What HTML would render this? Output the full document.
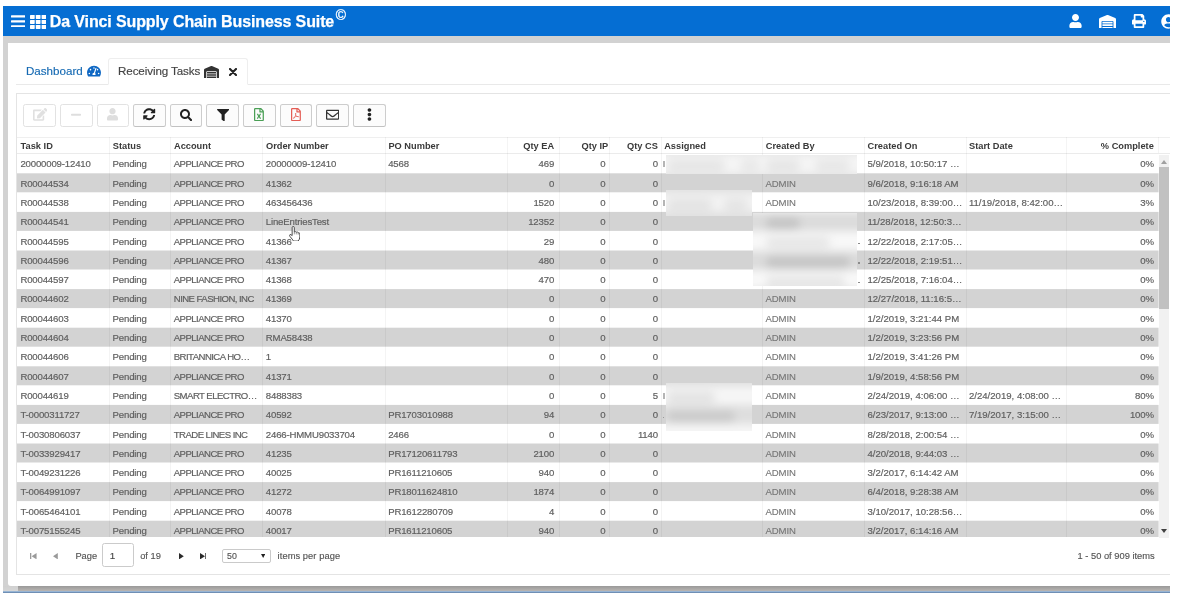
<!DOCTYPE html>
<html><head><meta charset="utf-8">
<style>
*{box-sizing:border-box;margin:0;padding:0}
html,body{width:1177px;height:598px;overflow:hidden;background:#fff;font-family:"Liberation Sans",sans-serif;}
#shot{position:absolute;left:3px;top:6px;width:1167px;height:587px;overflow:hidden;background:#d2d2d2;will-change:transform;}
#topbar{position:absolute;left:0;top:0;width:1167px;height:30px;background:#056ed3;}
#title{position:absolute;left:46.8px;top:5.6px;font-weight:bold;font-size:16px;color:#fff;white-space:nowrap;letter-spacing:-0.12px;line-height:20px;-webkit-text-stroke:0.25px #fff}
#copy{position:absolute;left:332.8px;top:2px;font-size:13.8px;line-height:16px;color:#fff;-webkit-text-stroke:0.3px #fff}
#panel{position:absolute;left:5px;top:37px;width:1170px;height:543px;background:#fff;border-radius:0 0 0 3px}
#bshadow{position:absolute;left:0;top:580px;width:1167px;height:5px;background:linear-gradient(#d0d0d0,#d6d6d6)}
#bshadow2{position:absolute;left:15px;top:580px;width:1152px;height:5px;background:linear-gradient(#999,#b9b5b2)}
#bline{position:absolute;left:0;top:584.6px;width:1167px;height:2.4px;background:linear-gradient(#b5d0ea,#6f8fb5 60%)}
.abs{position:absolute}
/* tabs */
#tabline{position:absolute;left:13px;top:78px;width:1160px;height:1px;background:#e9e9e9}
#tab2{position:absolute;left:105px;top:52px;width:140px;height:27px;border:1px solid #eeeeee;border-bottom:1px solid #fff;border-radius:3px 3px 0 0;background:#fff}
.tabtxt{position:absolute;font-size:11.6px;white-space:nowrap;line-height:14px;-webkit-text-stroke:0.15px currentColor}
/* grid */
#grid{position:absolute;left:13px;top:86.5px;width:1160px;height:482px;border:1px solid #e4e4e4;border-right:none;background:#fff}
.btn{position:absolute;top:10px;width:32.6px;height:23.2px;border:1px solid #cdcdcd;border-bottom-color:#c2c2c2;border-radius:2.5px;background:#fcfcfc}
.btn.dis{border-color:#e2e2e2;background:#fff}
.btn svg{position:absolute;left:0;top:0;width:100%;height:100%}
#hrow{position:absolute;left:0;top:43.5px;width:1160px;height:17px;border-top:1px solid #efefef;border-bottom:1px solid #ebebeb}
.hc{position:absolute;top:1px;height:15px;line-height:15px;font-size:9.25px;font-weight:bold;color:#3a3a3a;padding:0 3.6px;white-space:nowrap;overflow:hidden}
.hc.r{text-align:right;padding-right:4.5px}
#rows{position:absolute;left:0;top:60.8px;width:1141.6px;height:382.9px;overflow:hidden}
.row{position:absolute;left:0;width:1141.6px;height:19.15px}
.row.alt{background:#d3d3d3}
.c{position:absolute;top:0.1px;height:19.3px;line-height:19.3px;font-size:9.6px;letter-spacing:-0.16px;color:#5f5f5f;-webkit-text-stroke:0.18px #5f5f5f;padding:0 3.4px;white-space:nowrap;overflow:hidden}
.c.r{text-align:right;padding-right:4.5px}
.c.adm{color:#747474;-webkit-text-stroke:0.1px #747474}
.sep{position:absolute;top:43.5px;width:1px;height:400px;background:rgba(0,0,0,0.045)}
#sb{position:absolute;left:1141.6px;top:61px;width:10.6px;height:383px;background:#f1f1f1}
#sbthumb{position:absolute;left:0.4px;top:12.4px;width:10.2px;height:142px;background:#c1c1c1}
.blur{position:absolute;filter:blur(2px)}
/* per-column tuning */
.k2{letter-spacing:-0.56px}
.k10,.k11{letter-spacing:0.0px}
.h6{padding-right:1.2px !important}
.h7{padding-right:2.7px !important}
.k7{padding-right:2.7px !important}
.k6{padding-right:4px !important}
.k12,.h12{padding-right:3.7px !important}
/* pager */
.pg{position:absolute;font-size:9.3px;color:#555;-webkit-text-stroke:0.15px #555;line-height:12px;white-space:nowrap}
</style></head><body>
<div id="shot">
 <div id="topbar">
  <svg class="abs" style="left:7.6px;top:8.7px" width="14.6" height="12.8" viewBox="0 0 15 13" preserveAspectRatio="none"><rect x="0" y="0.2" width="15" height="2.4" rx="0.6" fill="#fff"/><rect x="0" y="5.3" width="15" height="2.4" rx="0.6" fill="#fff"/><rect x="0" y="10.4" width="15" height="2.4" rx="0.6" fill="#fff"/></svg>
  <svg class="abs" style="left:26.9px;top:8.6px" width="16.3" height="14" viewBox="0 0 16.6 14" preserveAspectRatio="none"><g fill="#fff"><rect x="0" y="0" width="4.8" height="3.9" rx=".6"/><rect x="5.9" y="0" width="4.8" height="3.9" rx=".6"/><rect x="11.8" y="0" width="4.8" height="3.9" rx=".6"/><rect x="0" y="5" width="4.8" height="3.9" rx=".6"/><rect x="5.9" y="5" width="4.8" height="3.9" rx=".6"/><rect x="11.8" y="5" width="4.8" height="3.9" rx=".6"/><rect x="0" y="10" width="4.8" height="3.9" rx=".6"/><rect x="5.9" y="10" width="4.8" height="3.9" rx=".6"/><rect x="11.8" y="10" width="4.8" height="3.9" rx=".6"/></g></svg>
  <div id="title">Da Vinci Supply Chain Business Suite</div><div id="copy">©</div>
  <!-- right icons -->
  <svg class="abs" style="left:1066px;top:8px" width="13" height="14" viewBox="0 0 448 512"><path fill="#fff" d="M224 256c70.700 0 128-57.300 128-128S294.700 0 224 0 96 57.300 96 128s57.300 128 128 128zm89.600 32h-16.700c-22.200 10.200-46.900 16-72.900 16s-50.600-5.800-72.900-16h-16.700C60.200 288 0 348.200 0 422.400V464c0 26.500 21.500 48 48 48h352c26.500 0 48-21.500 48-48v-41.600c0-74.200-60.200-134.400-134.400-134.400z"/></svg>
  <svg class="abs" style="left:1095.5px;top:8.500px" width="17" height="13.600" viewBox="0 0 640 512"><path fill="#fff" d="M504 352H136.400c-4.400 0-8 3.600-8 8l-.1 48c0 4.400 3.600 8 8 8H504c4.400 0 8-3.600 8-8v-48c0-4.400-3.600-8-8-8zm0 96H136.100c-4.400 0-8 3.600-8 8l-.1 48c0 4.400 3.600 8 8 8h368c4.400 0 8-3.600 8-8v-48c0-4.400-3.600-8-8-8zm0-192H136.600c-4.400 0-8 3.600-8 8l-.1 48c0 4.400 3.600 8 8 8H504c4.400 0 8-3.600 8-8v-48c0-4.400-3.600-8-8-8zm106.500-139L338.400 3.700a48.150 48.150 0 0 0-36.900 0L29.500 117C11.700 124.500 0 141.900 0 161.300V504c0 4.400 3.600 8 8 8h80c4.400 0 8-3.600 8-8V256c0-17.600 14.600-32 32.600-32h382.800c18 0 32.600 14.400 32.600 32v248c0 4.400 3.600 8 8 8h80c4.400 0 8-3.600 8-8V161.300c0-19.400-11.700-36.800-29.500-44.300z"/></svg>
  <svg class="abs" style="left:1129px;top:8px" width="14" height="14" viewBox="0 0 512 512"><path fill="#fff" d="M448 192V77.250c0-8.490-3.370-16.620-9.370-22.630L393.370 9.370c-6-6-14.140-9.370-22.630-9.370H96C78.330 0 64 14.330 64 32v160c-35.350 0-64 28.650-64 64v112c0 8.840 7.160 16 16 16h48v96c0 17.670 14.330 32 32 32h320c17.670 0 32-14.330 32-32v-96h48c8.840 0 16-7.160 16-16V256c0-35.350-28.650-64-64-64zm-64 256H128v-96h256v96zm0-224H128V64h192v48c0 8.840 7.160 16 16 16h48v96zm48 72c-13.250 0-24-10.750-24-24 0-13.260 10.750-24 24-24s24 10.740 24 24c0 13.250-10.750 24-24 24z"/></svg>
  <svg class="abs" style="left:1157.500px;top:7.500px" width="15" height="15" viewBox="0 0 496 512"><path fill="#fff" d="M248 8C111 8 0 119 0 256s111 248 248 248 248-111 248-248S385 8 248 8zm0 96c48.600 0 88 39.400 88 88s-39.400 88-88 88-88-39.400-88-88 39.400-88 88-88zm0 344c-58.700 0-111.300-26.600-146.500-68.200 18.800-35.400 55.600-59.800 98.500-59.800 2.400 0 4.800.4 7.100 1.100 13 4.200 26.600 6.900 40.900 6.900 14.300 0 28-2.700 40.900-6.900 2.300-.7 4.700-1.100 7.100-1.100 42.900 0 79.700 24.400 98.500 59.800C359.300 421.400 306.700 448 248 448z"/></svg>
 </div>
 <div id="panel"></div>
 <div id="bshadow"></div><div id="bshadow2"></div><div id="bline"></div>

 <!-- tabs -->
 <div id="tabline"></div>
 <div id="tab2"></div>
 <div class="tabtxt" style="left:23px;top:58px;color:#166ab3">Dashboard</div>
 <svg class="abs" style="left:83.8px;top:58.9px" width="14" height="12.4" viewBox="0 0 576 512"><path fill="#0f68c4" d="M288 32C128.940 32 0 160.940 0 320c0 52.800 14.250 102.260 39.060 144.800 5.610 9.620 16.300 15.200 27.440 15.200h443c11.140 0 21.830-5.580 27.440-15.200C561.750 422.260 576 372.800 576 320c0-159.060-128.940-288-288-288zm0 64c14.710 0 26.580 10.130 30.320 23.650-1.110 2.260-2.640 4.230-3.450 6.670l-9.220 27.670c-5.130 3.490-10.970 6.010-17.640 6.010-17.670 0-32-14.330-32-32S270.330 96 288 96zM96 384c-17.670 0-32-14.330-32-32s14.330-32 32-32 32 14.330 32 32-14.330 32-32 32zm48-160c-17.670 0-32-14.330-32-32s14.330-32 32-32 32 14.330 32 32-14.330 32-32 32zm246.770-72.410l-61.330 184C343.130 347.330 352 364.540 352 384c0 11.720-3.380 22.550-8.880 32H232.880c-5.500-9.450-8.880-20.280-8.880-32 0-33.940 26.500-61.430 59.900-63.590l61.340-184.010c4.170-12.560 17.730-19.450 30.360-15.170 12.570 4.190 19.350 17.790 15.170 30.360zm14.660 57.200l15.520-46.550c3.470-1.290 7.130-2.230 11.050-2.230 17.670 0 32 14.330 32 32s-14.330 32-32 32c-11.380-.01-20.890-6.280-26.570-15.220zM480 384c-17.670 0-32-14.330-32-32s14.330-32 32-32 32 14.330 32 32-14.330 32-32 32z"/></svg>
 <div class="tabtxt" style="left:115px;top:58px;color:#444;letter-spacing:-0.09px">Receiving Tasks</div>
 <svg class="abs" style="left:200.500px;top:60px" width="15" height="12" viewBox="0 0 640 512"><path fill="#333" d="M504 352H136.400c-4.400 0-8 3.600-8 8l-.1 48c0 4.400 3.600 8 8 8H504c4.400 0 8-3.600 8-8v-48c0-4.400-3.600-8-8-8zm0 96H136.100c-4.400 0-8 3.600-8 8l-.1 48c0 4.400 3.600 8 8 8h368c4.400 0 8-3.600 8-8v-48c0-4.400-3.600-8-8-8zm0-192H136.600c-4.400 0-8 3.600-8 8l-.1 48c0 4.400 3.600 8 8 8H504c4.400 0 8-3.600 8-8v-48c0-4.400-3.600-8-8-8zm106.500-139L338.400 3.700a48.150 48.150 0 0 0-36.900 0L29.500 117C11.700 124.500 0 141.900 0 161.300V504c0 4.400 3.600 8 8 8h80c4.400 0 8-3.600 8-8V256c0-17.600 14.600-32 32.600-32h382.800c18 0 32.600 14.400 32.600 32v248c0 4.400 3.600 8 8 8h80c4.400 0 8-3.600 8-8V161.300c0-19.400-11.700-36.800-29.500-44.300z"/></svg>
 <svg class="abs" style="left:225.500px;top:61.500px" width="8" height="8" viewBox="0 0 8 8"><path d="M1 1L7 7M7 1L1 7" stroke="#222" stroke-width="2.1" stroke-linecap="round"/></svg>

 <!-- grid -->
 <div id="grid">
  <!-- toolbar buttons: inserted below -->
  <div class="btn dis" style="left:6.30px"><svg style="left:8.80px;top:3.60px;width:14.40px;height:12.80px" viewBox="0 0 576 512"><path fill="#e0e0e0" d="M402.6 83.200l90.200 90.200c3.800 3.800 3.800 10 0 13.800L274.400 405.600l-92.800 10.300c-12.400 1.400-22.900-9.100-21.500-21.500l10.300-92.800L388.800 83.200c3.800-3.800 10-3.800 13.800 0zm162-22.900l-48.800-48.800c-15.200-15.200-39.900-15.200-55.200 0l-35.400 35.400c-3.800 3.800-3.800 10 0 13.800l90.200 90.200c3.800 3.800 10 3.800 13.800 0l35.400-35.400c15.200-15.300 15.200-40 0-55.200zM384 346.200V448H64V128h229.800c3.200 0 6.200-1.300 8.500-3.500l40-40c7.600-7.600 2.200-20.500-8.500-20.500H48C21.500 64 0 85.500 0 112v352c0 26.500 21.500 48 48 48h352c26.500 0 48-21.500 48-48V306.200c0-10.700-12.900-16-20.500-8.500l-40 40c-2.200 2.300-3.500 5.300-3.500 8.500z"/></svg></div>
<div class="btn dis" style="left:42.93px"><svg style="left:10.27px;top:4.35px;width:10.06px;height:11.50px" viewBox="0 0 448 512"><path fill="#dedede" d="M416 208H32c-17.670 0-32 14.330-32 32v32c0 17.670 14.330 32 32 32h384c17.670 0 32-14.330 32-32v-32c0-17.670-14.330-32-32-32z"/></svg></div>
<div class="btn dis" style="left:79.56px"><svg style="left:9.79px;top:3.60px;width:11.03px;height:12.60px" viewBox="0 0 448 512"><path fill="#dedede" d="M224 256c70.700 0 128-57.300 128-128S294.700 0 224 0 96 57.300 96 128s57.300 128 128 128zm89.600 32h-16.700c-22.200 10.200-46.900 16-72.900 16s-50.600-5.800-72.900-16h-16.700C60.200 288 0 348.200 0 422.400V464c0 26.500 21.500 48 48 48h352c26.500 0 48-21.500 48-48v-41.600c0-74.200-60.200-134.400-134.400-134.400z"/></svg></div>
<div class="btn" style="left:116.19px"><svg style="left:9.10px;top:3.90px;width:12.40px;height:12.40px" viewBox="0 0 512 512"><path fill="#222" d="M370.720 133.280C339.458 104.008 298.888 87.962 255.848 88c-77.458.068-144.328 53.178-162.791 126.850-1.344 5.363-6.122 9.150-11.651 9.150H24.103c-7.498 0-13.194-6.807-11.807-14.176C33.933 94.924 134.813 8 256 8c66.448 0 126.791 26.136 171.315 68.685L463.030 40.970C478.149 25.851 504 36.559 504 57.941V192c0 13.255-10.745 24-24 24H345.941c-21.382 0-32.090-25.851-16.971-40.971l41.750-41.749zM32 296h134.059c21.382 0 32.090 25.851 16.971 40.971l-41.750 41.750c31.262 29.273 71.835 45.319 114.876 45.280 77.418-.07 144.315-53.144 162.787-126.849 1.344-5.363 6.122-9.150 11.651-9.150h57.304c7.498 0 13.194 6.807 11.807 14.176C478.067 417.076 377.187 504 256 504c-66.448 0-126.791-26.136-171.315-68.685L48.970 471.030C33.851 486.149 8 475.441 8 454.059V320c0-13.255 10.745-24 24-24z"/></svg></div>
<div class="btn" style="left:152.82px"><svg style="left:9.15px;top:4.25px;width:12.30px;height:12.30px" viewBox="0 0 512 512"><path fill="#222" d="M505 442.700L405.300 343c-4.500-4.500-10.600-7-17-7H372c27.600-35.300 44-79.700 44-128C416 93.100 322.900 0 208 0S0 93.100 0 208s93.100 208 208 208c48.300 0 92.700-16.400 128-44v16.300c0 6.400 2.500 12.500 7 17l99.700 99.700c9.400 9.400 24.600 9.400 33.900 0l28.300-28.300c9.400-9.400 9.400-24.600.1-34zM208 336c-70.700 0-128-57.200-128-128 0-70.700 57.200-128 128-128 70.700 0 128 57.200 128 128 0 70.700-57.200 128-128 128z"/></svg></div>
<div class="btn" style="left:189.45px"><svg style="left:9.15px;top:4.15px;width:12.30px;height:12.30px" viewBox="0 0 512 512"><path fill="#222" d="M487.976 0H24.028C2.710 0-8.047 25.866 7.058 40.971L192 225.941V432c0 7.831 3.821 15.170 10.237 19.662l80 55.980C298.020 518.690 320 507.493 320 487.980V225.941l184.947-184.970C520.021 25.896 509.338 0 487.976 0z"/></svg></div>
<div class="btn" style="left:226.08px"><svg style="left:10.35px;top:3.60px;width:9.90px;height:13.20px" viewBox="0 0 384 512"><path fill="#4a9f55" d="M369.900 97.900L286 14C277 5 264.800-.1 252.100-.1H48C21.500 0 0 21.500 0 48v416c0 26.500 21.500 48 48 48h288c26.500 0 48-21.500 48-48V131.900c0-12.700-5.100-25-14.100-34zM332.100 128H256V51.900l76.100 76.100zM48 464V48h160v104c0 13.300 10.700 24 24 24h104v288H48zm212-240h-28.800c-4.400 0-8.400 2.400-10.500 6.300-18 33.100-22.200 42.400-28.600 57.700-13.900-29.100-6.900-17.300-28.600-57.700-2.100-3.900-6.200-6.300-10.600-6.300H124c-9.300 0-15 10-10.400 18l46.300 78-46.300 78c-4.700 8 1.100 18 10.400 18h28.900c4.400 0 8.400-2.400 10.500-6.300 21.700-40 23-45 28.600-57.700 14.900 30.200 5.900 15.900 28.600 57.700 2.100 3.900 6.200 6.300 10.600 6.300H260c9.300 0 15-10 10.400-18L224 320c.7-1.100 30.300-50.500 46.300-78 4.700-8-1.100-18-10.300-18z"/></svg></div>
<div class="btn" style="left:262.71px"><svg style="left:10.35px;top:3.60px;width:9.90px;height:13.20px" viewBox="0 0 384 512"><path fill="#e45d55" d="M369.900 97.900L286 14C277 5 264.800-.1 252.100-.1H48C21.500 0 0 21.500 0 48v416c0 26.500 21.500 48 48 48h288c26.500 0 48-21.500 48-48V131.900c0-12.700-5.100-25-14.100-34zM332.100 128H256V51.900l76.100 76.100zM48 464V48h160v104c0 13.300 10.700 24 24 24h104v288H48zm250.200-143.700c-12.200-12-47-8.700-64.400-6.500-17.200-10.500-28.700-25-36.800-46.300 3.900-16.100 10.100-40.600 5.400-56-4.200-26.200-37.800-23.600-42.600-5.900-4.400 16.100-.4 38.500 7 67.100-10 23.900-24.900 56-35.400 74.400-20 10.300-47 26.200-51 46.200-3.300 15.800 26 55.200 76.100-31.200 22.400-7.400 46.800-16.500 68.400-20.100 18.900 10.200 41 17 55.800 17 25.500 0 28-28.200 17.500-38.700zm-198.100 77.800c5.100-13.700 24.500-29.500 30.400-35-19 30.300-30.400 35.700-30.400 35zm81.600-190.600c7.400 0 6.700 32.100 1.800 40.800-4.400-13.900-4.300-40.800-1.800-40.800zm-24.400 136.600c9.700-16.900 18-37 24.700-54.700 8.300 15.100 18.900 27.200 30.100 35.500-20.800 4.300-38.900 13.100-54.800 19.200zm131.600-5s-5 6-37.300-7.800c35.100-2.600 40.900 5.400 37.300 7.800z"/></svg></div>
<div class="btn" style="left:299.34px"><svg style="left:8.65px;top:3.35px;width:13.30px;height:13.30px" viewBox="0 0 512 512"><path fill="#333" d="M464 64H48C21.490 64 0 85.490 0 112v288c0 26.510 21.490 48 48 48h416c26.510 0 48-21.490 48-48V112c0-26.510-21.490-48-48-48zm0 48v40.805c-22.422 18.259-58.168 46.651-134.587 106.490-16.841 13.247-50.201 45.072-73.413 44.701-23.208.375-56.579-31.459-73.413-44.701C106.180 199.465 70.425 171.067 48 152.805V112h416zM48 400V214.398c22.914 18.251 55.409 43.862 104.938 82.646 21.857 17.205 60.134 55.186 103.062 54.955 42.717.231 80.509-37.199 103.053-54.947 49.528-38.783 82.032-64.401 104.947-82.653V400H48z"/></svg></div>
<div class="btn" style="left:335.97px"><svg style="left:12.86px;top:3.50px;width:4.88px;height:13.00px" viewBox="0 0 192 512"><path fill="#222" d="M96 184c39.800 0 72 32.200 72 72s-32.200 72-72 72-72-32.200-72-72 32.200-72 72-72zM24 80c0 39.800 32.200 72 72 72s72-32.200 72-72S135.800 8 96 8 24 40.200 24 80zm0 352c0 39.800 32.200 72 72 72s72-32.200 72-72-32.200-72-72-72-72 32.200-72 72z"/></svg></div>
  <div id="hrow">
<div class="hc h0" style="left:0.0px;width:92.2px">Task ID</div>
<div class="hc h1" style="left:92.2px;width:61.2px">Status</div>
<div class="hc h2" style="left:153.4px;width:92.0px">Account</div>
<div class="hc h3" style="left:245.4px;width:122.4px">Order Number</div>
<div class="hc h4" style="left:367.8px;width:122.4px">PO Number</div>
<div class="hc r h5" style="left:490.2px;width:51.4px">Qty EA</div>
<div class="hc r h6" style="left:541.6px;width:50.8px">Qty IP</div>
<div class="hc r h7" style="left:592.4px;width:51.2px">Qty CS</div>
<div class="hc h8" style="left:643.6px;width:101.6px">Assigned</div>
<div class="hc h9" style="left:745.2px;width:101.8px">Created By</div>
<div class="hc h10" style="left:847.0px;width:101.5px">Created On</div>
<div class="hc h11" style="left:948.5px;width:100.5px">Start Date</div>
<div class="hc r h12" style="left:1049.0px;width:91.5px">% Complete</div>
  </div>
  <div id="rows">
<svg style="position:absolute;left:0;top:0" width="1141.6" height="390" viewBox="0 0 1141.6 390"><rect x="0" y="19.30" width="1141.6" height="19" fill="#d3d3d3"/><rect x="0" y="57.90" width="1141.6" height="19" fill="#d3d3d3"/><rect x="0" y="96.50" width="1141.6" height="19" fill="#d3d3d3"/><rect x="0" y="135.10" width="1141.6" height="19" fill="#d3d3d3"/><rect x="0" y="173.70" width="1141.6" height="19" fill="#d3d3d3"/><rect x="0" y="212.30" width="1141.6" height="19" fill="#d3d3d3"/><rect x="0" y="250.90" width="1141.6" height="19" fill="#d3d3d3"/><rect x="0" y="289.50" width="1141.6" height="19" fill="#d3d3d3"/><rect x="0" y="328.10" width="1141.6" height="19" fill="#d3d3d3"/><rect x="0" y="366.70" width="1141.6" height="19" fill="#d3d3d3"/></svg>
<div class="row" style="top:0.00px">
<div class="c k0" style="left:0.0px;width:92.2px">20000009-12410</div>
<div class="c k1" style="left:92.2px;width:61.2px">Pending</div>
<div class="c k2" style="left:153.4px;width:92.0px">APPLIANCE PRO</div>
<div class="c k3" style="left:245.4px;width:122.4px">20000009-12410</div>
<div class="c k4" style="left:367.8px;width:122.4px">4568</div>
<div class="c r k5" style="left:490.2px;width:51.4px">469</div>
<div class="c r k6" style="left:541.6px;width:50.8px">0</div>
<div class="c r k7" style="left:592.4px;width:51.2px">0</div>
<div class="c k10" style="left:847.0px;width:101.5px">5/9/2018, 10:50:17 …</div>
<div class="c r k12" style="left:1049.0px;width:91.5px">0%</div>
</div>
<div class="row" style="top:19.30px">
<div class="c k0" style="left:0.0px;width:92.2px">R00044534</div>
<div class="c k1" style="left:92.2px;width:61.2px">Pending</div>
<div class="c k2" style="left:153.4px;width:92.0px">APPLIANCE PRO</div>
<div class="c k3" style="left:245.4px;width:122.4px">41362</div>
<div class="c r k5" style="left:490.2px;width:51.4px">0</div>
<div class="c r k6" style="left:541.6px;width:50.8px">0</div>
<div class="c r k7" style="left:592.4px;width:51.2px">0</div>
<div class="c k9 adm" style="left:745.2px;width:101.8px">ADMIN</div>
<div class="c k10" style="left:847.0px;width:101.5px">9/6/2018, 9:16:18 AM</div>
<div class="c r k12" style="left:1049.0px;width:91.5px">0%</div>
</div>
<div class="row" style="top:38.60px">
<div class="c k0" style="left:0.0px;width:92.2px">R00044538</div>
<div class="c k1" style="left:92.2px;width:61.2px">Pending</div>
<div class="c k2" style="left:153.4px;width:92.0px">APPLIANCE PRO</div>
<div class="c k3" style="left:245.4px;width:122.4px">463456436</div>
<div class="c r k5" style="left:490.2px;width:51.4px">1520</div>
<div class="c r k6" style="left:541.6px;width:50.8px">0</div>
<div class="c r k7" style="left:592.4px;width:51.2px">0</div>
<div class="c k9 adm" style="left:745.2px;width:101.8px">ADMIN</div>
<div class="c k10" style="left:847.0px;width:101.5px">10/23/2018, 8:39:00…</div>
<div class="c k11" style="left:948.5px;width:100.5px">11/19/2018, 8:42:00…</div>
<div class="c r k12" style="left:1049.0px;width:91.5px">3%</div>
</div>
<div class="row" style="top:57.90px">
<div class="c k0" style="left:0.0px;width:92.2px">R00044541</div>
<div class="c k1" style="left:92.2px;width:61.2px">Pending</div>
<div class="c k2" style="left:153.4px;width:92.0px">APPLIANCE PRO</div>
<div class="c k3" style="left:245.4px;width:122.4px">LineEntriesTest</div>
<div class="c r k5" style="left:490.2px;width:51.4px">12352</div>
<div class="c r k6" style="left:541.6px;width:50.8px">0</div>
<div class="c r k7" style="left:592.4px;width:51.2px">0</div>
<div class="c k10" style="left:847.0px;width:101.5px">11/28/2018, 12:50:3…</div>
<div class="c r k12" style="left:1049.0px;width:91.5px">0%</div>
</div>
<div class="row" style="top:77.20px">
<div class="c k0" style="left:0.0px;width:92.2px">R00044595</div>
<div class="c k1" style="left:92.2px;width:61.2px">Pending</div>
<div class="c k2" style="left:153.4px;width:92.0px">APPLIANCE PRO</div>
<div class="c k3" style="left:245.4px;width:122.4px">41366</div>
<div class="c r k5" style="left:490.2px;width:51.4px">29</div>
<div class="c r k6" style="left:541.6px;width:50.8px">0</div>
<div class="c r k7" style="left:592.4px;width:51.2px">0</div>
<div class="c k10" style="left:847.0px;width:101.5px">12/22/2018, 2:17:05…</div>
<div class="c r k12" style="left:1049.0px;width:91.5px">0%</div>
</div>
<div class="row" style="top:96.50px">
<div class="c k0" style="left:0.0px;width:92.2px">R00044596</div>
<div class="c k1" style="left:92.2px;width:61.2px">Pending</div>
<div class="c k2" style="left:153.4px;width:92.0px">APPLIANCE PRO</div>
<div class="c k3" style="left:245.4px;width:122.4px">41367</div>
<div class="c r k5" style="left:490.2px;width:51.4px">480</div>
<div class="c r k6" style="left:541.6px;width:50.8px">0</div>
<div class="c r k7" style="left:592.4px;width:51.2px">0</div>
<div class="c k10" style="left:847.0px;width:101.5px">12/22/2018, 2:19:51…</div>
<div class="c r k12" style="left:1049.0px;width:91.5px">0%</div>
</div>
<div class="row" style="top:115.80px">
<div class="c k0" style="left:0.0px;width:92.2px">R00044597</div>
<div class="c k1" style="left:92.2px;width:61.2px">Pending</div>
<div class="c k2" style="left:153.4px;width:92.0px">APPLIANCE PRO</div>
<div class="c k3" style="left:245.4px;width:122.4px">41368</div>
<div class="c r k5" style="left:490.2px;width:51.4px">470</div>
<div class="c r k6" style="left:541.6px;width:50.8px">0</div>
<div class="c r k7" style="left:592.4px;width:51.2px">0</div>
<div class="c k10" style="left:847.0px;width:101.5px">12/25/2018, 7:16:04…</div>
<div class="c r k12" style="left:1049.0px;width:91.5px">0%</div>
</div>
<div class="row" style="top:135.10px">
<div class="c k0" style="left:0.0px;width:92.2px">R00044602</div>
<div class="c k1" style="left:92.2px;width:61.2px">Pending</div>
<div class="c k2" style="left:153.4px;width:92.0px">NINE FASHION, INC</div>
<div class="c k3" style="left:245.4px;width:122.4px">41369</div>
<div class="c r k5" style="left:490.2px;width:51.4px">0</div>
<div class="c r k6" style="left:541.6px;width:50.8px">0</div>
<div class="c r k7" style="left:592.4px;width:51.2px">0</div>
<div class="c k9 adm" style="left:745.2px;width:101.8px">ADMIN</div>
<div class="c k10" style="left:847.0px;width:101.5px">12/27/2018, 11:16:5…</div>
<div class="c r k12" style="left:1049.0px;width:91.5px">0%</div>
</div>
<div class="row" style="top:154.40px">
<div class="c k0" style="left:0.0px;width:92.2px">R00044603</div>
<div class="c k1" style="left:92.2px;width:61.2px">Pending</div>
<div class="c k2" style="left:153.4px;width:92.0px">APPLIANCE PRO</div>
<div class="c k3" style="left:245.4px;width:122.4px">41370</div>
<div class="c r k5" style="left:490.2px;width:51.4px">0</div>
<div class="c r k6" style="left:541.6px;width:50.8px">0</div>
<div class="c r k7" style="left:592.4px;width:51.2px">0</div>
<div class="c k9 adm" style="left:745.2px;width:101.8px">ADMIN</div>
<div class="c k10" style="left:847.0px;width:101.5px">1/2/2019, 3:21:44 PM</div>
<div class="c r k12" style="left:1049.0px;width:91.5px">0%</div>
</div>
<div class="row" style="top:173.70px">
<div class="c k0" style="left:0.0px;width:92.2px">R00044604</div>
<div class="c k1" style="left:92.2px;width:61.2px">Pending</div>
<div class="c k2" style="left:153.4px;width:92.0px">APPLIANCE PRO</div>
<div class="c k3" style="left:245.4px;width:122.4px">RMA58438</div>
<div class="c r k5" style="left:490.2px;width:51.4px">0</div>
<div class="c r k6" style="left:541.6px;width:50.8px">0</div>
<div class="c r k7" style="left:592.4px;width:51.2px">0</div>
<div class="c k9 adm" style="left:745.2px;width:101.8px">ADMIN</div>
<div class="c k10" style="left:847.0px;width:101.5px">1/2/2019, 3:23:56 PM</div>
<div class="c r k12" style="left:1049.0px;width:91.5px">0%</div>
</div>
<div class="row" style="top:193.00px">
<div class="c k0" style="left:0.0px;width:92.2px">R00044606</div>
<div class="c k1" style="left:92.2px;width:61.2px">Pending</div>
<div class="c k2" style="left:153.4px;width:92.0px">BRITANNICA HO…</div>
<div class="c k3" style="left:245.4px;width:122.4px">1</div>
<div class="c r k5" style="left:490.2px;width:51.4px">0</div>
<div class="c r k6" style="left:541.6px;width:50.8px">0</div>
<div class="c r k7" style="left:592.4px;width:51.2px">0</div>
<div class="c k9 adm" style="left:745.2px;width:101.8px">ADMIN</div>
<div class="c k10" style="left:847.0px;width:101.5px">1/2/2019, 3:41:26 PM</div>
<div class="c r k12" style="left:1049.0px;width:91.5px">0%</div>
</div>
<div class="row" style="top:212.30px">
<div class="c k0" style="left:0.0px;width:92.2px">R00044607</div>
<div class="c k1" style="left:92.2px;width:61.2px">Pending</div>
<div class="c k2" style="left:153.4px;width:92.0px">APPLIANCE PRO</div>
<div class="c k3" style="left:245.4px;width:122.4px">41371</div>
<div class="c r k5" style="left:490.2px;width:51.4px">0</div>
<div class="c r k6" style="left:541.6px;width:50.8px">0</div>
<div class="c r k7" style="left:592.4px;width:51.2px">0</div>
<div class="c k9 adm" style="left:745.2px;width:101.8px">ADMIN</div>
<div class="c k10" style="left:847.0px;width:101.5px">1/9/2019, 4:58:56 PM</div>
<div class="c r k12" style="left:1049.0px;width:91.5px">0%</div>
</div>
<div class="row" style="top:231.60px">
<div class="c k0" style="left:0.0px;width:92.2px">R00044619</div>
<div class="c k1" style="left:92.2px;width:61.2px">Pending</div>
<div class="c k2" style="left:153.4px;width:92.0px">SMART ELECTRO…</div>
<div class="c k3" style="left:245.4px;width:122.4px">8488383</div>
<div class="c r k5" style="left:490.2px;width:51.4px">0</div>
<div class="c r k6" style="left:541.6px;width:50.8px">0</div>
<div class="c r k7" style="left:592.4px;width:51.2px">5</div>
<div class="c k9 adm" style="left:745.2px;width:101.8px">ADMIN</div>
<div class="c k10" style="left:847.0px;width:101.5px">2/24/2019, 4:06:00 …</div>
<div class="c k11" style="left:948.5px;width:100.5px">2/24/2019, 4:08:00 …</div>
<div class="c r k12" style="left:1049.0px;width:91.5px">80%</div>
</div>
<div class="row" style="top:250.90px">
<div class="c k0" style="left:0.0px;width:92.2px">T-0000311727</div>
<div class="c k1" style="left:92.2px;width:61.2px">Pending</div>
<div class="c k2" style="left:153.4px;width:92.0px">APPLIANCE PRO</div>
<div class="c k3" style="left:245.4px;width:122.4px">40592</div>
<div class="c k4" style="left:367.8px;width:122.4px">PR1703010988</div>
<div class="c r k5" style="left:490.2px;width:51.4px">94</div>
<div class="c r k6" style="left:541.6px;width:50.8px">0</div>
<div class="c r k7" style="left:592.4px;width:51.2px">0</div>
<div class="c k9 adm" style="left:745.2px;width:101.8px">ADMIN</div>
<div class="c k10" style="left:847.0px;width:101.5px">6/23/2017, 9:13:00 …</div>
<div class="c k11" style="left:948.5px;width:100.5px">7/19/2017, 3:15:00 …</div>
<div class="c r k12" style="left:1049.0px;width:91.5px">100%</div>
</div>
<div class="row" style="top:270.20px">
<div class="c k0" style="left:0.0px;width:92.2px">T-0030806037</div>
<div class="c k1" style="left:92.2px;width:61.2px">Pending</div>
<div class="c k2" style="left:153.4px;width:92.0px">TRADE LINES INC</div>
<div class="c k3" style="left:245.4px;width:122.4px">2466-HMMU9033704</div>
<div class="c k4" style="left:367.8px;width:122.4px">2466</div>
<div class="c r k5" style="left:490.2px;width:51.4px">0</div>
<div class="c r k6" style="left:541.6px;width:50.8px">0</div>
<div class="c r k7" style="left:592.4px;width:51.2px">1140</div>
<div class="c k9 adm" style="left:745.2px;width:101.8px">ADMIN</div>
<div class="c k10" style="left:847.0px;width:101.5px">8/28/2018, 2:00:54 …</div>
<div class="c r k12" style="left:1049.0px;width:91.5px">0%</div>
</div>
<div class="row" style="top:289.50px">
<div class="c k0" style="left:0.0px;width:92.2px">T-0033929417</div>
<div class="c k1" style="left:92.2px;width:61.2px">Pending</div>
<div class="c k2" style="left:153.4px;width:92.0px">APPLIANCE PRO</div>
<div class="c k3" style="left:245.4px;width:122.4px">41235</div>
<div class="c k4" style="left:367.8px;width:122.4px">PR17120611793</div>
<div class="c r k5" style="left:490.2px;width:51.4px">2100</div>
<div class="c r k6" style="left:541.6px;width:50.8px">0</div>
<div class="c r k7" style="left:592.4px;width:51.2px">0</div>
<div class="c k9 adm" style="left:745.2px;width:101.8px">ADMIN</div>
<div class="c k10" style="left:847.0px;width:101.5px">4/20/2018, 9:44:03 …</div>
<div class="c r k12" style="left:1049.0px;width:91.5px">0%</div>
</div>
<div class="row" style="top:308.80px">
<div class="c k0" style="left:0.0px;width:92.2px">T-0049231226</div>
<div class="c k1" style="left:92.2px;width:61.2px">Pending</div>
<div class="c k2" style="left:153.4px;width:92.0px">APPLIANCE PRO</div>
<div class="c k3" style="left:245.4px;width:122.4px">40025</div>
<div class="c k4" style="left:367.8px;width:122.4px">PR1611210605</div>
<div class="c r k5" style="left:490.2px;width:51.4px">940</div>
<div class="c r k6" style="left:541.6px;width:50.8px">0</div>
<div class="c r k7" style="left:592.4px;width:51.2px">0</div>
<div class="c k9 adm" style="left:745.2px;width:101.8px">ADMIN</div>
<div class="c k10" style="left:847.0px;width:101.5px">3/2/2017, 6:14:42 AM</div>
<div class="c r k12" style="left:1049.0px;width:91.5px">0%</div>
</div>
<div class="row" style="top:328.10px">
<div class="c k0" style="left:0.0px;width:92.2px">T-0064991097</div>
<div class="c k1" style="left:92.2px;width:61.2px">Pending</div>
<div class="c k2" style="left:153.4px;width:92.0px">APPLIANCE PRO</div>
<div class="c k3" style="left:245.4px;width:122.4px">41272</div>
<div class="c k4" style="left:367.8px;width:122.4px">PR18011624810</div>
<div class="c r k5" style="left:490.2px;width:51.4px">1874</div>
<div class="c r k6" style="left:541.6px;width:50.8px">0</div>
<div class="c r k7" style="left:592.4px;width:51.2px">0</div>
<div class="c k9 adm" style="left:745.2px;width:101.8px">ADMIN</div>
<div class="c k10" style="left:847.0px;width:101.5px">6/4/2018, 9:28:38 AM</div>
<div class="c r k12" style="left:1049.0px;width:91.5px">0%</div>
</div>
<div class="row" style="top:347.40px">
<div class="c k0" style="left:0.0px;width:92.2px">T-0065464101</div>
<div class="c k1" style="left:92.2px;width:61.2px">Pending</div>
<div class="c k2" style="left:153.4px;width:92.0px">APPLIANCE PRO</div>
<div class="c k3" style="left:245.4px;width:122.4px">40078</div>
<div class="c k4" style="left:367.8px;width:122.4px">PR1612280709</div>
<div class="c r k5" style="left:490.2px;width:51.4px">4</div>
<div class="c r k6" style="left:541.6px;width:50.8px">0</div>
<div class="c r k7" style="left:592.4px;width:51.2px">0</div>
<div class="c k9 adm" style="left:745.2px;width:101.8px">ADMIN</div>
<div class="c k10" style="left:847.0px;width:101.5px">3/10/2017, 10:28:56…</div>
<div class="c r k12" style="left:1049.0px;width:91.5px">0%</div>
</div>
<div class="row" style="top:366.70px">
<div class="c k0" style="left:0.0px;width:92.2px">T-0075155245</div>
<div class="c k1" style="left:92.2px;width:61.2px">Pending</div>
<div class="c k2" style="left:153.4px;width:92.0px">APPLIANCE PRO</div>
<div class="c k3" style="left:245.4px;width:122.4px">40017</div>
<div class="c k4" style="left:367.8px;width:122.4px">PR1611210605</div>
<div class="c r k5" style="left:490.2px;width:51.4px">940</div>
<div class="c r k6" style="left:541.6px;width:50.8px">0</div>
<div class="c r k7" style="left:592.4px;width:51.2px">0</div>
<div class="c k9 adm" style="left:745.2px;width:101.8px">ADMIN</div>
<div class="c k10" style="left:847.0px;width:101.5px">3/2/2017, 6:14:16 AM</div>
<div class="c r k12" style="left:1049.0px;width:91.5px">0%</div>
</div>
  </div>
<div class="sep" style="left:92.2px"></div>
<div class="sep" style="left:153.4px"></div>
<div class="sep" style="left:245.4px"></div>
<div class="sep" style="left:367.8px"></div>
<div class="sep" style="left:490.2px"></div>
<div class="sep" style="left:541.6px"></div>
<div class="sep" style="left:592.4px"></div>
<div class="sep" style="left:643.6px"></div>
<div class="sep" style="left:745.2px"></div>
<div class="sep" style="left:847.0px"></div>
<div class="sep" style="left:948.5px"></div>
<div class="sep" style="left:1049.0px"></div>
  <div class="sep" style="left:1140.5px;height:16px"></div>
  <div id="sb"><div id="sbthumb"></div>
   <svg class="abs" style="left:2.500px;top:5px" width="6" height="4" viewBox="0 0 6 4"><path d="M0 4L3 0L6 4Z" fill="#a0a0a0"/></svg>
   <svg class="abs" style="left:2.500px;top:374px" width="6" height="4" viewBox="0 0 6 4"><path d="M0 0L3 4L6 0Z" fill="#404040"/></svg>
  </div>
  <div style="position:absolute;left:648.9px;top:61.7px;width:191.6px;height:19.0px;overflow:hidden;background:#fff"><div style="position:absolute;left:-12px;top:-12px;width:215.6px;height:43.0px;filter:blur(4.5px)"><div style="position:absolute;left:0;top:-8.2px;width:215.6px;height:19px;background:#d3d3d3"></div><div style="position:absolute;left:0;top:30.4px;width:215.6px;height:19px;background:#d3d3d3"></div><div style="position:absolute;left:13.1px;top:16.9px;width:58.0px;height:11px;background:rgba(90,90,90,0.22);border-radius:5px"></div><div style="position:absolute;left:86.1px;top:16.9px;width:20.0px;height:11px;background:rgba(90,90,90,0.18);border-radius:5px"></div><div style="position:absolute;left:112.1px;top:16.9px;width:34.0px;height:11px;background:rgba(90,90,90,0.22);border-radius:5px"></div><div style="position:absolute;left:161.1px;top:16.9px;width:35.0px;height:11px;background:rgba(90,90,90,0.2);border-radius:5px"></div></div><div style="position:absolute;left:0;top:0;right:0;bottom:0;background:rgba(236,236,236,0.55)"></div></div>
<div style="position:absolute;left:648.9px;top:96.7px;width:86.0px;height:25.4px;overflow:hidden;background:#fff"><div style="position:absolute;left:-12px;top:-12px;width:110.0px;height:49.4px;filter:blur(4.5px)"><div style="position:absolute;left:0;top:-4.6px;width:110.0px;height:19px;background:#d3d3d3"></div><div style="position:absolute;left:0;top:34.0px;width:110.0px;height:19px;background:#d3d3d3"></div><div style="position:absolute;left:13.1px;top:20.5px;width:45.0px;height:11px;background:rgba(90,90,90,0.22);border-radius:5px"></div><div style="position:absolute;left:70.1px;top:20.5px;width:24.0px;height:11px;background:rgba(90,90,90,0.2);border-radius:5px"></div></div><div style="position:absolute;left:0;top:0;right:0;bottom:0;background:rgba(234,234,234,0.55)"></div></div>
<div style="position:absolute;left:735.8px;top:119.2px;width:104.4px;height:72.9px;overflow:hidden;background:#fff"><div style="position:absolute;left:-12px;top:-12px;width:128.4px;height:96.9px;filter:blur(4.5px)"><div style="position:absolute;left:0;top:11.5px;width:128.4px;height:19px;background:#d3d3d3"></div><div style="position:absolute;left:0;top:50.1px;width:128.4px;height:19px;background:#d3d3d3"></div><div style="position:absolute;left:0;top:88.7px;width:128.4px;height:19px;background:#d3d3d3"></div><div style="position:absolute;left:25.2px;top:17.3px;width:34.0px;height:11px;background:rgba(70,70,70,0.26);border-radius:5px"></div><div style="position:absolute;left:25.2px;top:36.6px;width:64.0px;height:11px;background:rgba(90,90,90,0.16);border-radius:5px"></div><div style="position:absolute;left:25.2px;top:55.9px;width:84.0px;height:11px;background:rgba(70,70,70,0.26);border-radius:5px"></div><div style="position:absolute;left:25.2px;top:75.2px;width:79.0px;height:11px;background:rgba(90,90,90,0.16);border-radius:5px"></div></div><div style="position:absolute;left:0;top:0;right:0;bottom:0;background:rgba(236,236,236,0.35)"></div></div>
<div style="position:absolute;left:648.8px;top:289.7px;width:86.2px;height:47.6px;overflow:hidden;background:#fff"><div style="position:absolute;left:-12px;top:-12px;width:110.2px;height:71.6px;filter:blur(4.5px)"><div style="position:absolute;left:0;top:-4.6px;width:110.2px;height:19px;background:#d3d3d3"></div><div style="position:absolute;left:0;top:34.0px;width:110.2px;height:19px;background:#d3d3d3"></div><div style="position:absolute;left:13.2px;top:20.5px;width:48.0px;height:11px;background:rgba(90,90,90,0.22);border-radius:5px"></div><div style="position:absolute;left:13.2px;top:39.8px;width:68.0px;height:11px;background:rgba(70,70,70,0.26);border-radius:5px"></div></div><div style="position:absolute;left:0;top:0;right:0;bottom:0;background:rgba(236,236,236,0.45)"></div></div>
<div style="position:absolute;left:646.4px;top:67.6px;width:1.2px;height:6px;background:#b5b5b5"></div>
<div style="position:absolute;left:646.4px;top:106.2px;width:1.2px;height:6px;background:#b5b5b5"></div>
<div style="position:absolute;left:646.4px;top:299.2px;width:1.2px;height:6px;background:#b5b5b5"></div>
<div style="position:absolute;left:646.0px;top:323.5px;width:1.4px;height:1.4px;background:#999"></div>
<div style="position:absolute;left:841.3px;top:149.6px;width:1.4px;height:1.4px;background:#8a8a8a"></div>
<div style="position:absolute;left:841.3px;top:168.9px;width:1.4px;height:1.4px;background:#8a8a8a"></div>
<div style="position:absolute;left:841.3px;top:188.2px;width:1.4px;height:1.4px;background:#8a8a8a"></div>
<svg style="position:absolute;left:271.6px;top:132.1px" width="11.8" height="15.8" viewBox="0 0 12 16"><path d="M3.2 1.600Q3.200.5 4.300.5 5.400.5 5.400 1.600L5.400 6Q6.500 5.200 7.400 6.200 8.600 5.600 9.300 6.800 10.800 6.400 11 8L11 11Q11 13.500 9.300 15.300L4.600 15.300Q3.500 13.500 1 10.600 0 9.300 1 8.700 2 8.300 3.200 9.800Z" fill="#fff" stroke="#3a3a3a" stroke-width="0.9" stroke-linejoin="round"/><path d="M5.400 6V8.500M7.400 6.300V8.500M9.300 7V8.800" stroke="#555" stroke-width="0.6" fill="none"/></svg>
  <svg style="position:absolute;left:13.4px;top:459.1px" width="6.6" height="6.4" viewBox="0 0 6.6 6.4"><rect x="0" y="0" width="1.3" height="6.4" fill="#9a9a9a"/><path d="M6.6 0V6.400L1.600 3.200Z" fill="#9a9a9a"/></svg>
<svg style="position:absolute;left:36.0px;top:459.1px" width="4.8" height="6.4" viewBox="0 0 4.8 6.4"><path d="M4.800 0V6.400L0 3.200Z" fill="#9a9a9a"/></svg>
<div class="pg" style="left:58.4px;top:456.8px;">Page</div>
<div style="position:absolute;left:85.0px;top:449.9px;width:32.2px;height:24px;border:1px solid #cbcbcb;border-radius:2.5px;background:#fff"></div>
<div class="pg" style="left:92.8px;top:456.8px;font-size:9.8px;color:#444;margin-top:-0.2px">1</div>
<div class="pg" style="left:123.2px;top:456.8px;">of 19</div>
<svg style="position:absolute;left:162.0px;top:459.1px" width="4.8" height="6.4" viewBox="0 0 4.8 6.4"><path d="M0 0V6.400L4.800 3.200Z" fill="#2a2a2a"/></svg>
<svg style="position:absolute;left:182.6px;top:459.1px" width="6.6" height="6.4" viewBox="0 0 6.6 6.4"><rect x="5.300" y="0" width="1.3" height="6.4" fill="#2a2a2a"/><path d="M0 0V6.400L5 3.200Z" fill="#2a2a2a"/></svg>
<div style="position:absolute;left:205.3px;top:455.0px;width:49.2px;height:14.2px;border:1px solid #cacaca;border-radius:2px;background:#fff"></div>
<div class="pg" style="left:210.0px;top:456.8px;font-size:8.8px">50</div>
<svg style="position:absolute;left:244.2px;top:460.1px" width="4.3" height="4" viewBox="0 0 4.8 4.4"><path d="M0 0H4.800L2.400 4.400Z" fill="#222"/></svg>
<div class="pg" style="left:260.6px;top:456.8px;letter-spacing:0.08px">items per page</div>
<div class="pg" style="left:983.0px;width:154.6px;text-align:right;top:456.5px">1 - 50 of 909 items</div>
 </div>
</div>
</body></html>
